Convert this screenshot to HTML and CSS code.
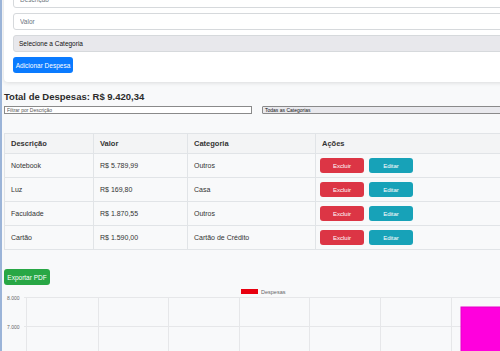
FILE: index.html
```html
<!DOCTYPE html>
<html lang="pt-BR">
<head>
    <meta charset="UTF-8">
    <title>Controle de Despesas</title>
    <link rel="stylesheet" href="styles.css">
</head>
<body>
    <div class="page">
        <div class="card">
            <input class="field" type="text" placeholder="Descrição">
            <input class="field" type="text" placeholder="Valor">
            <div class="field select">Selecione a Categoria</div>
            <button class="btn btn-blue">Adicionar Despesa</button>
        </div>

        <h3 class="total">Total de Despesas: R$ 9.420,34</h3>
        <div class="filters">
            <input class="filter" type="text" placeholder="Filtrar por Descrição">
            <div class="filter-select">Todas as Categorias</div>
        </div>

        <table class="list">
            <thead>
                <tr><th class="c1">Descrição</th><th class="c2">Valor</th><th class="c3">Categoria</th><th>Ações</th></tr>
            </thead>
            <tbody>
                <tr><td>Notebook</td><td>R$ 5.789,99</td><td>Outros</td><td class="acts"><button class="sm red">Excluir</button><button class="sm teal">Editar</button></td></tr>
                <tr><td>Luz</td><td>R$ 169,80</td><td>Casa</td><td class="acts"><button class="sm red">Excluir</button><button class="sm teal">Editar</button></td></tr>
                <tr><td>Faculdade</td><td>R$ 1.870,55</td><td>Outros</td><td class="acts"><button class="sm red">Excluir</button><button class="sm teal">Editar</button></td></tr>
                <tr><td>Cartão</td><td>R$ 1.590,00</td><td>Cartão de Crédito</td><td class="acts"><button class="sm red">Excluir</button><button class="sm teal">Editar</button></td></tr>
            </tbody>
        </table>

        <button class="btn btn-green">Exportar PDF</button>

        <svg class="chart" width="560" height="67" viewBox="0 0 560 67">
            <!-- legenda -->
            <rect x="237" y="4" width="17" height="5" fill="#e8000f"/>
            <text x="257" y="9" class="legend">Despesas</text>
            <!-- grade -->
            <g stroke="#e6e7e9" stroke-width="1">
                <line x1="20" y1="12.5" x2="560" y2="12.5"/>
                <line x1="20" y1="41.5" x2="560" y2="41.5"/>
                <line x1="22.5" y1="12" x2="22.5" y2="67"/>
                <line x1="94.5" y1="12" x2="94.5" y2="67"/>
                <line x1="164.5" y1="12" x2="164.5" y2="67"/>
                <line x1="235.5" y1="12" x2="235.5" y2="67"/>
                <line x1="305.5" y1="12" x2="305.5" y2="67"/>
                <line x1="376.5" y1="12" x2="376.5" y2="67"/>
                <line x1="447.5" y1="12" x2="447.5" y2="67"/>
            </g>
            <text x="3" y="14.5" class="tick">8.000</text>
            <text x="3" y="43.5" class="tick">7.000</text>
            <rect x="457" y="22" width="80" height="45" fill="#ff00dd" stroke="#e600c8" stroke-width="1"/>
        </svg>
    </div>
</body>
</html>
```

FILE: styles.css
```css
*{
    margin: 0;
    padding: 0;
    box-sizing: border-box;
}
html, body{
    height: 100%;
    overflow: hidden;
}
body{
    background: #f8f9fa;
    border-left: 2px solid #9bb4d8;
    font-family: "Liberation Sans", Arial, sans-serif;
    color: #212529;
}
.page{
    width: 560px;
    margin-top: -18px;
    padding-left: 2px;
}
.card{
    display: flex;
    flex-direction: column;
    align-items: flex-start;
    gap: 5px;
    padding: 9px;
    background: #fff;
    border-radius: 4px;
    box-shadow: 0 1px 4px rgba(0,0,0,.12);
}
.field{
    align-self: stretch;
    height: 17px;
    padding: 0 6px;
    border: 1px solid #d6d9dc;
    border-radius: 3px;
    font-family: inherit;
    font-size: 6.5px;
    background: #fff;
    outline: none;
}
.field::placeholder{
    color: #6c757d;
}
.select{
    display: flex;
    align-items: center;
    padding-left: 5px;
    background: #e8e8ec;
    color: #111;
}
.btn{
    height: 16px;
    padding: 0;
    border: none;
    border-radius: 3px;
    color: #fff;
    font-family: inherit;
    font-size: 6.5px;
}
.btn-blue{
    width: 60px;
    background: #0a7bff;
}
.btn-green{
    display: block;
    width: 46px;
    margin-top: 19px;
    background: #28a745;
}
.total{
    margin-top: 9px;
    font-size: 9.5px;
    line-height: 11px;
    color: #2b2b2b;
}
.filters{
    display: flex;
    gap: 10px;
    margin-top: 4px;
}
.filter{
    width: 248px;
    height: 8px;
    padding: 0 2px;
    border: 1px solid #8a8a8a;
    font-family: inherit;
    font-size: 5px;
    background: #fff;
    outline: none;
}
.filter::placeholder{
    color: #555;
}
.filter-select{
    flex: 1;
    height: 8px;
    padding-left: 2px;
    border: 1px solid #8a8a8a;
    border-radius: 1px;
    background: #e9e9ed;
    font-size: 5px;
    line-height: 6px;
    color: #111;
}
.list{
    width: 560px;
    margin-top: 19px;
    border-collapse: collapse;
    font-size: 7px;
    color: #333;
}
.list th, .list td{
    padding: 0 6px;
    border: 1px solid #e1e4e7;
    text-align: left;
}
.list th{
    height: 20px;
    font-size: 7.5px;
    font-weight: bold;
    background: #f3f4f5;
}
.list td{
    height: 24px;
}
.list td.acts{
    padding-left: 4px;
}
.list .c1{ width: 89px; }
.list .c2{ width: 94px; }
.list .c3{ width: 128px; }
.sm{
    width: 44px;
    height: 15px;
    margin-right: 5px;
    border: none;
    border-radius: 3px;
    color: #fff;
    font-family: inherit;
    font-size: 6px;
    vertical-align: middle;
}
.red{
    background: #dc3545;
}
.teal{
    background: #17a2b8;
}
.chart{
    display: block;
}
.legend{
    font-size: 5.5px;
    fill: #666;
}
.tick{
    font-size: 5px;
    fill: #666;
}
```
